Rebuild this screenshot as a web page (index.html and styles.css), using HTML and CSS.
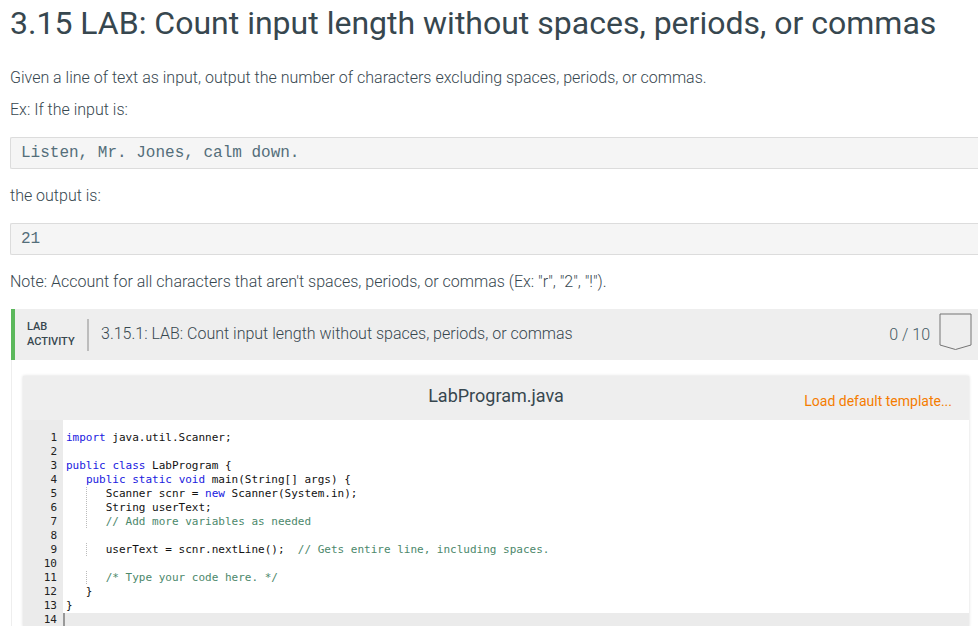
FILE: index.html
```html
<!DOCTYPE html>
<html lang="en">
<head>
  <meta charset="UTF-8">
  <title>3.15 LAB: Count input length without spaces, periods, or commas</title>
  <link rel="stylesheet" href="styles.css">
</head>
<body>
  <h1>3.15 LAB: Count input length without spaces, periods, or commas</h1>
  <p class="first">Given a line of text as input, output the number of characters excluding spaces, periods, or commas.</p>
  <p class="ex">Ex: If the input is:</p>
  <pre class="sample">Listen, Mr. Jones, calm down.</pre>
  <p class="after">the output is:</p>
  <pre class="sample">21</pre>
  <p class="after">Note: Account for all characters that aren't spaces, periods, or commas (Ex: "r", "2", "!").</p>

  <div class="lab">
    <div class="lab-head">
      <div class="lab-tag">LAB<br>ACTIVITY</div>
      <div class="lab-title">3.15.1: LAB: Count input length without spaces, periods, or commas</div>
      <div class="lab-score">0 / 10</div>
      <svg class="badge" width="33" height="38" viewBox="0 0 33 38">
        <path d="M1 1H32V32L16.500 36.500L1 32Z" fill="none" stroke="#757575" stroke-width="1"/>
      </svg>
    </div>
    <div class="lab-body">
      <div class="editor">
        <div class="editor-head">
          <div class="file">LabProgram.java</div>
          <div class="load">Load default template...</div>
        </div>
        <div class="code">
          <div class="gutter">1<br>2<br>3<br>4<br>5<br>6<br>7<br>8<br>9<br>10<br>11<br>12<br>13<br><span class="cur-num">14</span></div>
          <div class="lines">
            <div class="ln"><b>import</b> java.util.Scanner;</div>
            <div class="ln"></div>
            <div class="ln"><b>public</b> <b>class</b> LabProgram {</div>
            <div class="ln">   <b>public</b> <b>static</b> <b>void</b> main(String[] args) {</div>
            <div class="ln guide">      Scanner scnr = <b>new</b> Scanner(System.in);</div>
            <div class="ln guide">      String userText;</div>
            <div class="ln guide">      <i>// Add more variables as needed</i></div>
            <div class="ln"></div>
            <div class="ln guide">      userText = scnr.nextLine();  <i>// Gets entire line, including spaces.</i></div>
            <div class="ln"></div>
            <div class="ln guide">      <i>/* Type your code here. */</i></div>
            <div class="ln">   }</div>
            <div class="ln">}</div>
            <div class="ln current"></div>
          </div>
        </div>
      </div>
    </div>
  </div>
</body>
</html>
```

FILE: styles.css
```css
html, body {
  overflow: hidden;
}
body {
  margin: 0;
  height: 626px;
  padding-left: 10px;
  font-family: Roboto, sans-serif;
  font-weight: 300;
  font-size: 16px;
  color: #37474f;
  background: white;
}
h1 {
  margin: 0;
  padding-top: 3px;
  font-size: 32px;
  line-height: 40px;
  font-weight: 400;
  white-space: nowrap;
}
p {
  margin: 0;
  line-height: 20px;
}
.first {
  margin-top: 25px;
}
.ex {
  margin-top: 12px;
}
.after {
  margin-top: 17px;
}
.sample {
  margin: 17px 0 0;
  height: 32px;
  box-sizing: border-box;
  padding: 0 10px;
  font-family: "Liberation Mono", monospace;
  font-size: 16px;
  line-height: 31px;
  color: #546e7a;
  background: #f5f5f5;
  border: 1px solid #dcdcdc;
  border-right: none;
  border-radius: 2px 0 0 2px;
}
.lab {
  margin: 17px 0 0 1px;
  border-left: 1px solid #eee;
}
.lab-head {
  display: flex;
  align-items: center;
  height: 51px;
  background: #eee;
  border-left: 4px solid #5cb85c;
  margin-left: -1px;
  padding-right: 6px;
}
.lab-tag {
  width: 72px;
  padding: 0 0 2px 12px;
  box-sizing: border-box;
  font-size: 11px;
  font-weight: 500;
  line-height: 15px;
  flex: none;
}
.lab-title {
  border-left: 2px solid #bdbdbd;
  height: 32px;
  padding-left: 12px;
  line-height: 30px;
  flex: 1;
}
.lab-score {
  margin-right: 9px;
  color: #455a64;
}
.badge {
  flex: none;
  align-self: flex-start;
  margin-top: 4px;
}
.lab-body {
  padding: 16px 9px 0 11px;
}
.editor {
  box-shadow: 0 0 3px rgba(0, 0, 0, 0.15);
}
.editor-head {
  position: relative;
  height: 44px;
  background: #eee;
  text-align: center;
}
.file {
  font-size: 18px;
  font-weight: 400;
  line-height: 40px;
}
.load {
  position: absolute;
  right: 17px;
  top: 15px;
  font-size: 14px;
  font-weight: 400;
  line-height: 20px;
  color: #f57c00;
}
.code {
  display: flex;
  padding-top: 11px;
  font-family: "DejaVu Sans Mono", monospace;
  font-size: 11px;
  line-height: 14px;
  color: #111;
  background: white;
}
.gutter {
  width: 40px;
  flex: none;
  margin-top: -11px;
  padding: 11px 6px 0 0;
  box-sizing: border-box;
  text-align: right;
  background: #ebebeb;
  color: #222;
}
.lines {
  flex: 1;
}
.ln {
  height: 14px;
  padding-left: 3px;
  white-space: pre;
}
.ln b {
  font-weight: 400;
  color: #2020e0;
}
.ln i {
  font-style: normal;
  color: #4c886b;
}
.guide {
  background: linear-gradient(#bbb 50%, transparent 50%) 23px 0 / 1px 2px repeat-y;
}
.current {
  background: #ebebeb;
  border-left: 2px solid #999;
  padding-left: 1px;
}
```
